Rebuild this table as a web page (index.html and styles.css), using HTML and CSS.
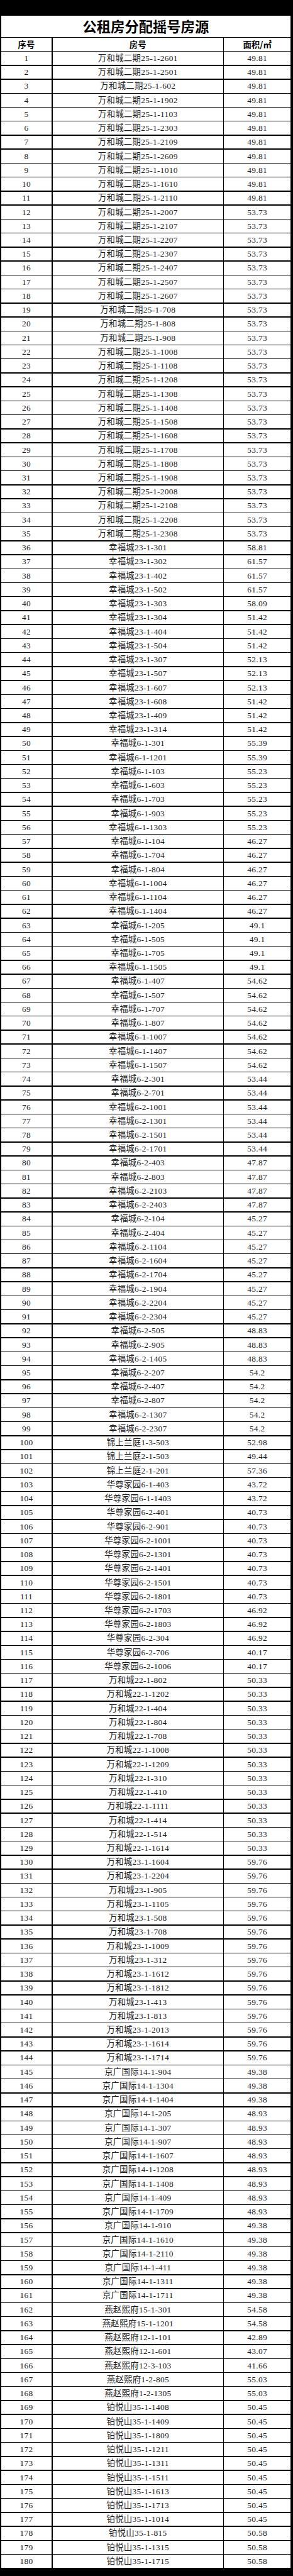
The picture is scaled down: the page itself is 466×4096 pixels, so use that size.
FILE: index.html
```html
<!DOCTYPE html>
<html lang="zh-CN">
<head>
<meta charset="utf-8">
<title>公租房分配摇号房源</title>
<link rel="stylesheet" href="styles.css">
</head>
<body>
<main class="sheet">
<h1 class="title">公租房分配摇号房源</h1>
<div class="hd">序号</div><div class="hd">房号</div><div class="hd">面积/㎡</div>
<div>1</div><div>万和城二期25-1-2601</div><div>49.81</div>
<div>2</div><div>万和城二期25-1-2501</div><div>49.81</div>
<div>3</div><div>万和城二期25-1-602</div><div>49.81</div>
<div>4</div><div>万和城二期25-1-1902</div><div>49.81</div>
<div>5</div><div>万和城二期25-1-1103</div><div>49.81</div>
<div>6</div><div>万和城二期25-1-2303</div><div>49.81</div>
<div>7</div><div>万和城二期25-1-2109</div><div>49.81</div>
<div>8</div><div>万和城二期25-1-2609</div><div>49.81</div>
<div>9</div><div>万和城二期25-1-1010</div><div>49.81</div>
<div>10</div><div>万和城二期25-1-1610</div><div>49.81</div>
<div>11</div><div>万和城二期25-1-2110</div><div>49.81</div>
<div>12</div><div>万和城二期25-1-2007</div><div>53.73</div>
<div>13</div><div>万和城二期25-1-2107</div><div>53.73</div>
<div>14</div><div>万和城二期25-1-2207</div><div>53.73</div>
<div>15</div><div>万和城二期25-1-2307</div><div>53.73</div>
<div>16</div><div>万和城二期25-1-2407</div><div>53.73</div>
<div>17</div><div>万和城二期25-1-2507</div><div>53.73</div>
<div>18</div><div>万和城二期25-1-2607</div><div>53.73</div>
<div>19</div><div>万和城二期25-1-708</div><div>53.73</div>
<div>20</div><div>万和城二期25-1-808</div><div>53.73</div>
<div>21</div><div>万和城二期25-1-908</div><div>53.73</div>
<div>22</div><div>万和城二期25-1-1008</div><div>53.73</div>
<div>23</div><div>万和城二期25-1-1108</div><div>53.73</div>
<div>24</div><div>万和城二期25-1-1208</div><div>53.73</div>
<div>25</div><div>万和城二期25-1-1308</div><div>53.73</div>
<div>26</div><div>万和城二期25-1-1408</div><div>53.73</div>
<div>27</div><div>万和城二期25-1-1508</div><div>53.73</div>
<div>28</div><div>万和城二期25-1-1608</div><div>53.73</div>
<div>29</div><div>万和城二期25-1-1708</div><div>53.73</div>
<div>30</div><div>万和城二期25-1-1808</div><div>53.73</div>
<div>31</div><div>万和城二期25-1-1908</div><div>53.73</div>
<div>32</div><div>万和城二期25-1-2008</div><div>53.73</div>
<div>33</div><div>万和城二期25-1-2108</div><div>53.73</div>
<div>34</div><div>万和城二期25-1-2208</div><div>53.73</div>
<div>35</div><div>万和城二期25-1-2308</div><div>53.73</div>
<div>36</div><div>幸福城23-1-301</div><div>58.81</div>
<div>37</div><div>幸福城23-1-302</div><div>61.57</div>
<div>38</div><div>幸福城23-1-402</div><div>61.57</div>
<div>39</div><div>幸福城23-1-502</div><div>61.57</div>
<div>40</div><div>幸福城23-1-303</div><div>58.09</div>
<div>41</div><div>幸福城23-1-304</div><div>51.42</div>
<div>42</div><div>幸福城23-1-404</div><div>51.42</div>
<div>43</div><div>幸福城23-1-504</div><div>51.42</div>
<div>44</div><div>幸福城23-1-307</div><div>52.13</div>
<div>45</div><div>幸福城23-1-507</div><div>52.13</div>
<div>46</div><div>幸福城23-1-607</div><div>52.13</div>
<div>47</div><div>幸福城23-1-608</div><div>51.42</div>
<div>48</div><div>幸福城23-1-409</div><div>51.42</div>
<div>49</div><div>幸福城23-1-314</div><div>51.42</div>
<div>50</div><div>幸福城6-1-301</div><div>55.39</div>
<div>51</div><div>幸福城6-1-1201</div><div>55.39</div>
<div>52</div><div>幸福城6-1-103</div><div>55.23</div>
<div>53</div><div>幸福城6-1-603</div><div>55.23</div>
<div>54</div><div>幸福城6-1-703</div><div>55.23</div>
<div>55</div><div>幸福城6-1-903</div><div>55.23</div>
<div>56</div><div>幸福城6-1-1303</div><div>55.23</div>
<div>57</div><div>幸福城6-1-104</div><div>46.27</div>
<div>58</div><div>幸福城6-1-704</div><div>46.27</div>
<div>59</div><div>幸福城6-1-804</div><div>46.27</div>
<div>60</div><div>幸福城6-1-1004</div><div>46.27</div>
<div>61</div><div>幸福城6-1-1104</div><div>46.27</div>
<div>62</div><div>幸福城6-1-1404</div><div>46.27</div>
<div>63</div><div>幸福城6-1-205</div><div>49.1</div>
<div>64</div><div>幸福城6-1-505</div><div>49.1</div>
<div>65</div><div>幸福城6-1-705</div><div>49.1</div>
<div>66</div><div>幸福城6-1-1505</div><div>49.1</div>
<div>67</div><div>幸福城6-1-407</div><div>54.62</div>
<div>68</div><div>幸福城6-1-507</div><div>54.62</div>
<div>69</div><div>幸福城6-1-707</div><div>54.62</div>
<div>70</div><div>幸福城6-1-807</div><div>54.62</div>
<div>71</div><div>幸福城6-1-1007</div><div>54.62</div>
<div>72</div><div>幸福城6-1-1407</div><div>54.62</div>
<div>73</div><div>幸福城6-1-1507</div><div>54.62</div>
<div>74</div><div>幸福城6-2-301</div><div>53.44</div>
<div>75</div><div>幸福城6-2-701</div><div>53.44</div>
<div>76</div><div>幸福城6-2-1001</div><div>53.44</div>
<div>77</div><div>幸福城6-2-1301</div><div>53.44</div>
<div>78</div><div>幸福城6-2-1501</div><div>53.44</div>
<div>79</div><div>幸福城6-2-1701</div><div>53.44</div>
<div>80</div><div>幸福城6-2-403</div><div>47.87</div>
<div>81</div><div>幸福城6-2-803</div><div>47.87</div>
<div>82</div><div>幸福城6-2-2103</div><div>47.87</div>
<div>83</div><div>幸福城6-2-2403</div><div>47.87</div>
<div>84</div><div>幸福城6-2-104</div><div>45.27</div>
<div>85</div><div>幸福城6-2-404</div><div>45.27</div>
<div>86</div><div>幸福城6-2-1104</div><div>45.27</div>
<div>87</div><div>幸福城6-2-1604</div><div>45.27</div>
<div>88</div><div>幸福城6-2-1704</div><div>45.27</div>
<div>89</div><div>幸福城6-2-1904</div><div>45.27</div>
<div>90</div><div>幸福城6-2-2204</div><div>45.27</div>
<div>91</div><div>幸福城6-2-2304</div><div>45.27</div>
<div>92</div><div>幸福城6-2-505</div><div>48.83</div>
<div>93</div><div>幸福城6-2-905</div><div>48.83</div>
<div>94</div><div>幸福城6-2-1405</div><div>48.83</div>
<div>95</div><div>幸福城6-2-207</div><div>54.2</div>
<div>96</div><div>幸福城6-2-407</div><div>54.2</div>
<div>97</div><div>幸福城6-2-807</div><div>54.2</div>
<div>98</div><div>幸福城6-2-1307</div><div>54.2</div>
<div>99</div><div>幸福城6-2-2307</div><div>54.2</div>
<div>100</div><div>锦上兰庭1-3-503</div><div>52.98</div>
<div>101</div><div>锦上兰庭2-1-503</div><div>49.44</div>
<div>102</div><div>锦上兰庭2-1-201</div><div>57.36</div>
<div>103</div><div>华尊家园6-1-403</div><div>43.72</div>
<div>104</div><div>华尊家园6-1-1403</div><div>43.72</div>
<div>105</div><div>华尊家园6-2-401</div><div>40.73</div>
<div>106</div><div>华尊家园6-2-901</div><div>40.73</div>
<div>107</div><div>华尊家园6-2-1001</div><div>40.73</div>
<div>108</div><div>华尊家园6-2-1301</div><div>40.73</div>
<div>109</div><div>华尊家园6-2-1401</div><div>40.73</div>
<div>110</div><div>华尊家园6-2-1501</div><div>40.73</div>
<div>111</div><div>华尊家园6-2-1801</div><div>40.73</div>
<div>112</div><div>华尊家园6-2-1703</div><div>46.92</div>
<div>113</div><div>华尊家园6-2-1803</div><div>46.92</div>
<div>114</div><div>华尊家园6-2-304</div><div>46.92</div>
<div>115</div><div>华尊家园6-2-706</div><div>40.17</div>
<div>116</div><div>华尊家园6-2-1006</div><div>40.17</div>
<div>117</div><div>万和城22-1-802</div><div>50.33</div>
<div>118</div><div>万和城22-1-1202</div><div>50.33</div>
<div>119</div><div>万和城22-1-404</div><div>50.33</div>
<div>120</div><div>万和城22-1-804</div><div>50.33</div>
<div>121</div><div>万和城22-1-708</div><div>50.33</div>
<div>122</div><div>万和城22-1-1008</div><div>50.33</div>
<div>123</div><div>万和城22-1-1209</div><div>50.33</div>
<div>124</div><div>万和城22-1-310</div><div>50.33</div>
<div>125</div><div>万和城22-1-410</div><div>50.33</div>
<div>126</div><div>万和城22-1-1111</div><div>50.33</div>
<div>127</div><div>万和城22-1-414</div><div>50.33</div>
<div>128</div><div>万和城22-1-514</div><div>50.33</div>
<div>129</div><div>万和城22-1-1614</div><div>50.33</div>
<div>130</div><div>万和城23-1-1604</div><div>59.76</div>
<div>131</div><div>万和城23-1-2204</div><div>59.76</div>
<div>132</div><div>万和城23-1-905</div><div>59.76</div>
<div>133</div><div>万和城23-1-1105</div><div>59.76</div>
<div>134</div><div>万和城23-1-508</div><div>59.76</div>
<div>135</div><div>万和城23-1-708</div><div>59.76</div>
<div>136</div><div>万和城23-1-1009</div><div>59.76</div>
<div>137</div><div>万和城23-1-312</div><div>59.76</div>
<div>138</div><div>万和城23-1-1612</div><div>59.76</div>
<div>139</div><div>万和城23-1-1812</div><div>59.76</div>
<div>140</div><div>万和城23-1-413</div><div>59.76</div>
<div>141</div><div>万和城23-1-813</div><div>59.76</div>
<div>142</div><div>万和城23-1-2013</div><div>59.76</div>
<div>143</div><div>万和城23-1-1614</div><div>59.76</div>
<div>144</div><div>万和城23-1-1714</div><div>59.76</div>
<div>145</div><div>京广国际14-1-904</div><div>49.38</div>
<div>146</div><div>京广国际14-1-1304</div><div>49.38</div>
<div>147</div><div>京广国际14-1-1404</div><div>49.38</div>
<div>148</div><div>京广国际14-1-205</div><div>48.93</div>
<div>149</div><div>京广国际14-1-307</div><div>48.93</div>
<div>150</div><div>京广国际14-1-907</div><div>48.93</div>
<div>151</div><div>京广国际14-1-1607</div><div>48.93</div>
<div>152</div><div>京广国际14-1-1208</div><div>48.93</div>
<div>153</div><div>京广国际14-1-1408</div><div>48.93</div>
<div>154</div><div>京广国际14-1-409</div><div>48.93</div>
<div>155</div><div>京广国际14-1-1709</div><div>48.93</div>
<div>156</div><div>京广国际14-1-910</div><div>49.38</div>
<div>157</div><div>京广国际14-1-1610</div><div>49.38</div>
<div>158</div><div>京广国际14-1-2110</div><div>49.38</div>
<div>159</div><div>京广国际14-1-411</div><div>49.38</div>
<div>160</div><div>京广国际14-1-1311</div><div>49.38</div>
<div>161</div><div>京广国际14-1-1711</div><div>49.38</div>
<div>162</div><div>燕赵熙府15-1-301</div><div>54.58</div>
<div>163</div><div>燕赵熙府15-1-1201</div><div>54.58</div>
<div>164</div><div>燕赵熙府12-1-101</div><div>42.89</div>
<div>165</div><div>燕赵熙府12-1-601</div><div>43.07</div>
<div>166</div><div>燕赵熙府12-3-103</div><div>41.66</div>
<div>167</div><div>燕赵熙府1-2-805</div><div>55.03</div>
<div>168</div><div>燕赵熙府1-2-1305</div><div>55.03</div>
<div>169</div><div>铂悦山35-1-1408</div><div>50.45</div>
<div>170</div><div>铂悦山35-1-1409</div><div>50.45</div>
<div>171</div><div>铂悦山35-1-1809</div><div>50.45</div>
<div>172</div><div>铂悦山35-1-1211</div><div>50.45</div>
<div>173</div><div>铂悦山35-1-1311</div><div>50.45</div>
<div>174</div><div>铂悦山35-1-1511</div><div>50.45</div>
<div>175</div><div>铂悦山35-1-1613</div><div>50.45</div>
<div>176</div><div>铂悦山35-1-1713</div><div>50.45</div>
<div>177</div><div>铂悦山35-1-1014</div><div>50.45</div>
<div>178</div><div>铂悦山35-1-815</div><div>50.58</div>
<div>179</div><div>铂悦山35-1-1315</div><div>50.58</div>
<div>180</div><div>铂悦山35-1-1715</div><div>50.58</div>
</main>
</body>
</html>
```

FILE: styles.css
```css
html, body {
  margin: 0;
  padding: 0;
  background: #000;
}

.sheet {
  box-sizing: border-box;
  width: 466px;
  display: grid;
  grid-template-columns: 80.9px 270.8px 106.1px;
  grid-template-rows: 34.1px repeat(181, 20.78px);
  gap: 1.48px;
  padding: 24.5px 3.7px 3px 1.5px;
  background: #000;
  font-family: "Liberation Serif", "Noto Sans CJK SC", serif;
  font-size: 13.4px;
  color: #1a1a1a;
}

.sheet > div,
.title {
  background: #fff;
  display: flex;
  align-items: center;
  justify-content: center;
  line-height: 1;
  white-space: nowrap;
  letter-spacing: 0.3px;
}

.title {
  grid-column: 1 / -1;
  margin: 0;
  font-family: "Noto Sans CJK SC", sans-serif;
  font-size: 22.3px;
  font-weight: 700;
  color: #000;
  letter-spacing: 0;
}

.sheet > .hd {
  font-family: "Noto Sans CJK SC", sans-serif;
  font-weight: 700;
  color: #000;
  letter-spacing: 0;
}
```
